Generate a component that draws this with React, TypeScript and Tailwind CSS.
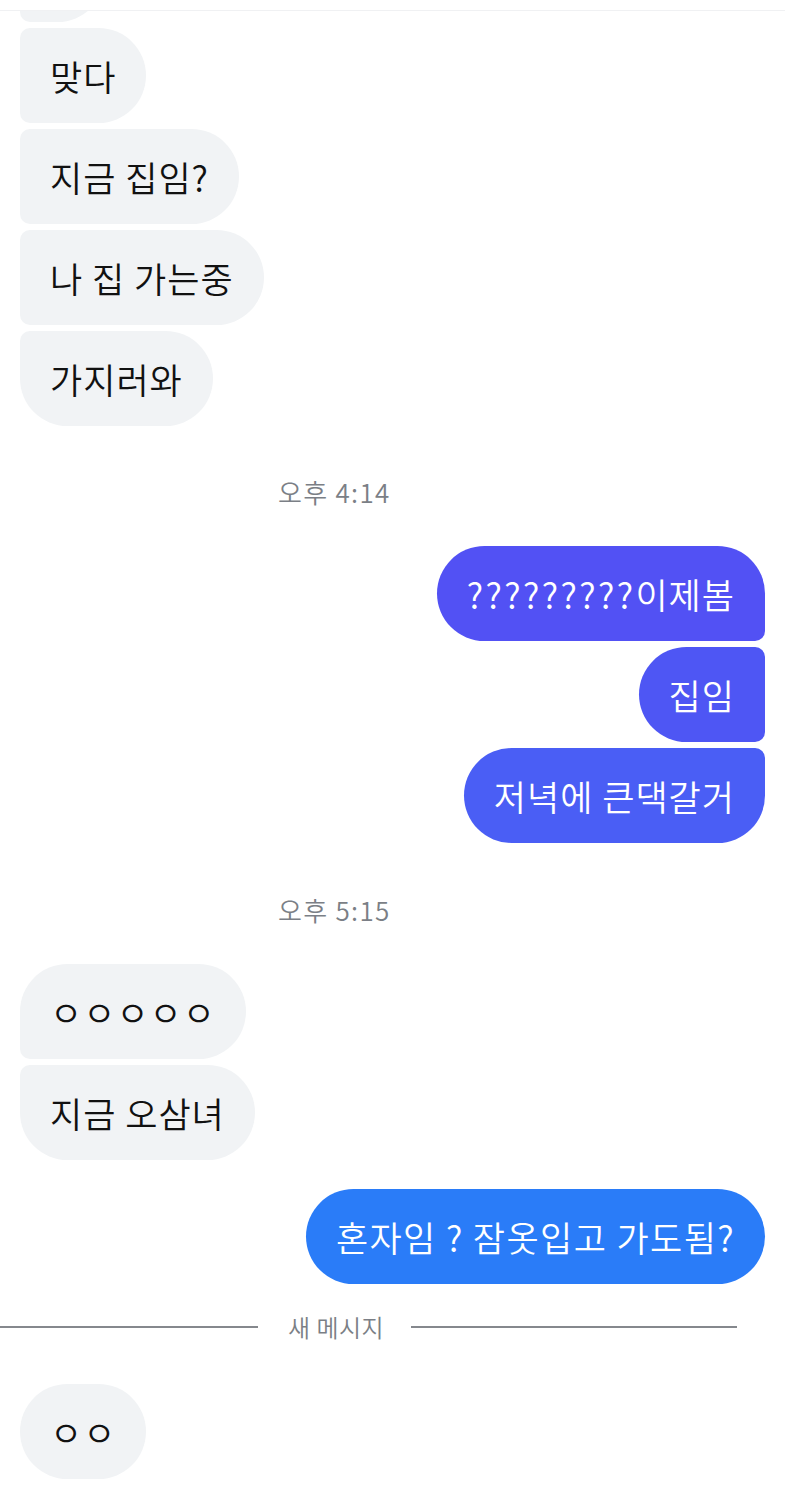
import React from "react";

type Pos = "single" | "first" | "middle" | "last";

interface Msg {
  text: React.ReactNode;
  pos: Pos;
  color?: string;
}

const incomingRadius: Record<Pos, string> = {
  single: "rounded-[48px]",
  first: "rounded-r-[48px] rounded-tl-[48px] rounded-bl-[10px]",
  middle: "rounded-r-[48px] rounded-l-[10px]",
  last: "rounded-r-[48px] rounded-tl-[10px] rounded-bl-[48px]",
};

const outgoingRadius: Record<Pos, string> = {
  single: "rounded-[48px]",
  first: "rounded-l-[48px] rounded-tr-[48px] rounded-br-[10px]",
  middle: "rounded-l-[48px] rounded-r-[10px]",
  last: "rounded-l-[48px] rounded-tr-[10px] rounded-br-[48px]",
};

function Incoming({ text, pos }: Msg) {
  return (
    <div className="flex">
      <div
        className={`h-[95px] flex items-center px-[30px] bg-[#f1f3f5] text-[#111] text-[35px] tracking-[1px] font-[350] leading-none ${incomingRadius[pos]}`}
      >
        {text}
      </div>
    </div>
  );
}

function Outgoing({ text, pos, color }: Msg) {
  return (
    <div className="flex justify-end">
      <div
        className={`h-[95px] flex items-center px-[30px] text-white text-[35px] tracking-[1px] font-[350] leading-none ${outgoingRadius[pos]} ${color}`}
      >
        {text}
      </div>
    </div>
  );
}

function Stamp({ text }: { text: string }) {
  return (
    <div className="pl-[278px] h-[30px] flex items-center text-[26px] tracking-[1.3px] font-[350] text-[#7b7f86] leading-none">
      {text}
    </div>
  );
}

export default function App() {
  return (
    <div
      className="w-[785px] h-[1492px] bg-white overflow-hidden flex flex-col"
      style={{ fontFamily: '"Noto Sans CJK KR", "Noto Sans", sans-serif' }}
    >
      <div className="h-[11px] shrink-0 bg-white border-b border-[#f0f1f3] relative z-10" />
      <div className="flex flex-col pl-[20px] pr-[20px]">
        <div className="-mt-[84px] w-[85px] h-[95px] bg-[#f1f3f5] rounded-r-[48px] rounded-l-[10px]" />
        <div className="flex flex-col gap-[6px] mt-[6px]">
          <Incoming text="맞다" pos="middle" />
          <Incoming text="지금 집임?" pos="middle" />
          <Incoming text="나 집 가는중" pos="middle" />
          <Incoming text="가지러와" pos="last" />
        </div>

        <div className="mt-[51px] -ml-[20px]">
          <Stamp text="오후 4:14" />
        </div>

        <div className="flex flex-col gap-[6px] mt-[39px]">
          <Outgoing
            text={
              <>
                <span className="tracking-[2.4px]">?????????</span>이제봄
              </>
            }
            pos="first"
            color="bg-[#5251f4]"
          />
          <Outgoing text="집임" pos="middle" color="bg-[#4e56f4]" />
          <Outgoing text="저녁에 큰댁갈거" pos="last" color="bg-[#4a5ef5]" />
        </div>

        <div className="mt-[52px] -ml-[20px]">
          <Stamp text="오후 5:15" />
        </div>

        <div className="flex flex-col gap-[6px] mt-[39px]">
          <Incoming text="ㅇㅇㅇㅇㅇ" pos="first" />
          <Incoming text="지금 오삼녀" pos="last" />
        </div>

        <div className="mt-[29px]">
          <Outgoing
            text={<span className="tracking-[1.4px]">혼자임 ? 잠옷입고 가도됨?</span>}
            pos="single"
            color="bg-[#2a7cf8]"
          />
        </div>
      </div>

      <div className="mt-[28px] h-[30px] flex items-center pr-[48px]">
        <div className="w-[258px] h-[2px] bg-[#85888d]" />
        <div className="ml-[30px] text-[24px] tracking-[0.5px] font-[350] text-[#7b7f86] leading-none">새 메시지</div>
        <div className="ml-[27px] flex-1 h-[2px] bg-[#85888d]" />
      </div>

      <div className="mt-[42px] pl-[20px]">
        <Incoming text="ㅇㅇ" pos="single" />
      </div>
    </div>
  );
}
